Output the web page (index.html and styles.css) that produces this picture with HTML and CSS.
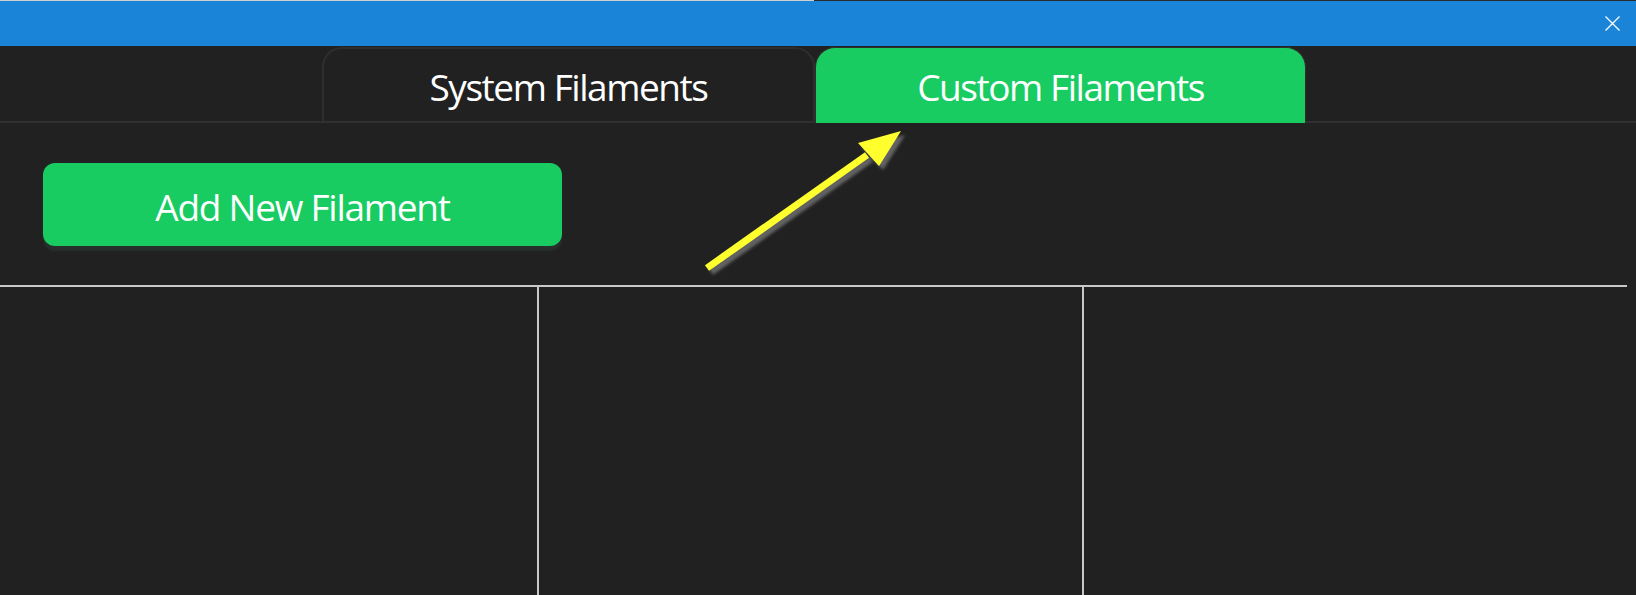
FILE: index.html
```html
<!DOCTYPE html>
<html>
<head>
<meta charset="utf-8">
<link rel="stylesheet" href="styles.css">
</head>
<body>
<div class="page">
  <div class="topline"><div class="topline-left"></div></div>
  <header class="titlebar">
    <svg class="close" width="15" height="15" viewBox="0 0 15 15"><path d="M0.5 0.5 L14.5 14.5 M14.5 0.5 L0.5 14.5" stroke="#ffffff" stroke-width="1.3" fill="none"/></svg>
  </header>
  <nav class="tabbar">
    <div class="tab tab-system">System Filaments</div>
    <div class="tab tab-custom">Custom Filaments</div>
  </nav>
  <section class="toolbar">
    <button class="add-btn">Add New Filament</button>
  </section>
  <div class="table">
    <div class="col col-1"></div>
    <div class="vline"></div>
    <div class="col col-2"></div>
    <div class="vline"></div>
    <div class="col col-3"></div>
  </div>
  <svg class="arrow" width="1636" height="595" viewBox="0 0 1636 595">
    <defs>
      <filter id="sh" x="-20%" y="-20%" width="140%" height="140%">
        <feDropShadow dx="4" dy="4" stdDeviation="1.8" flood-color="#6a6a6a" flood-opacity="0.9"/>
      </filter>
    </defs>
    <g filter="url(#sh)">
      <line x1="707" y1="268" x2="867" y2="155" stroke="#ffff2e" stroke-width="7"/>
      <polygon points="901,131 858,143 879,166" fill="#ffff2e"/>
    </g>
  </svg>
</div>
</body>
</html>
```
FILE: styles.css
```css
* { box-sizing: border-box; }
html, body { margin: 0; padding: 0; }
body {
  background: #212121;
  font-family: "Open Sans", "Noto Sans", sans-serif;
  color: #ffffff;
}
.page {
  position: relative;
  width: 1636px;
  height: 595px;
  overflow: hidden;
  background: #212121;
}
.topline {
  height: 1px;
  background: #2b2b2b;
}
.topline-left {
  width: 814px;
  height: 1px;
  background: #cfcfcf;
}
.titlebar {
  height: 45px;
  background: #1a84d8;
  display: flex;
  align-items: center;
  justify-content: flex-end;
  padding-right: 16px;
}
.close { display: block; }
.tabbar {
  height: 77px;
  display: flex;
  align-items: flex-start;
  padding-left: 322px;
  padding-top: 1px;
  border-bottom: 2px solid #303030;
}
.tab {
  display: flex;
  align-items: center;
  justify-content: center;
  font-size: 37px;
  letter-spacing: -1.45px;
  border-radius: 20px 20px 0 0;
  padding-top: 3px;
}
.tab-system {
  width: 493px;
  height: 74px;
  border: 2px solid #2e2e2e;
  border-bottom: none;
  background: #212121;
}
.tab-custom {
  width: 491px;
  height: 76px;
  margin-bottom: -2px;
  background: #18cc62;
  border: 1px solid #2f2f2f;
  border-bottom: none;
  padding-top: 1px;
}
.toolbar {
  height: 162px;
  padding-top: 40px;
  padding-left: 43px;
}
.add-btn {
  width: 519px;
  height: 83px;
  border: none;
  border-radius: 12px;
  background: #18cc62;
  color: #ffffff;
  font-family: "Open Sans", "Noto Sans", sans-serif;
  font-size: 37px;
  letter-spacing: -1.25px;
  padding: 3px 0 0 0;
  box-shadow: 0 5px 2px #28302b;
}
.table {
  width: 1627px;
  height: 310px;
  border-top: 2px solid #c8c8c8;
  display: grid;
  grid-template-columns: 537px 2px 543px 2px 543px;
}
.vline { background: #c8c8c8; }
.arrow {
  position: absolute;
  left: 0;
  top: 0;
  pointer-events: none;
}
```
